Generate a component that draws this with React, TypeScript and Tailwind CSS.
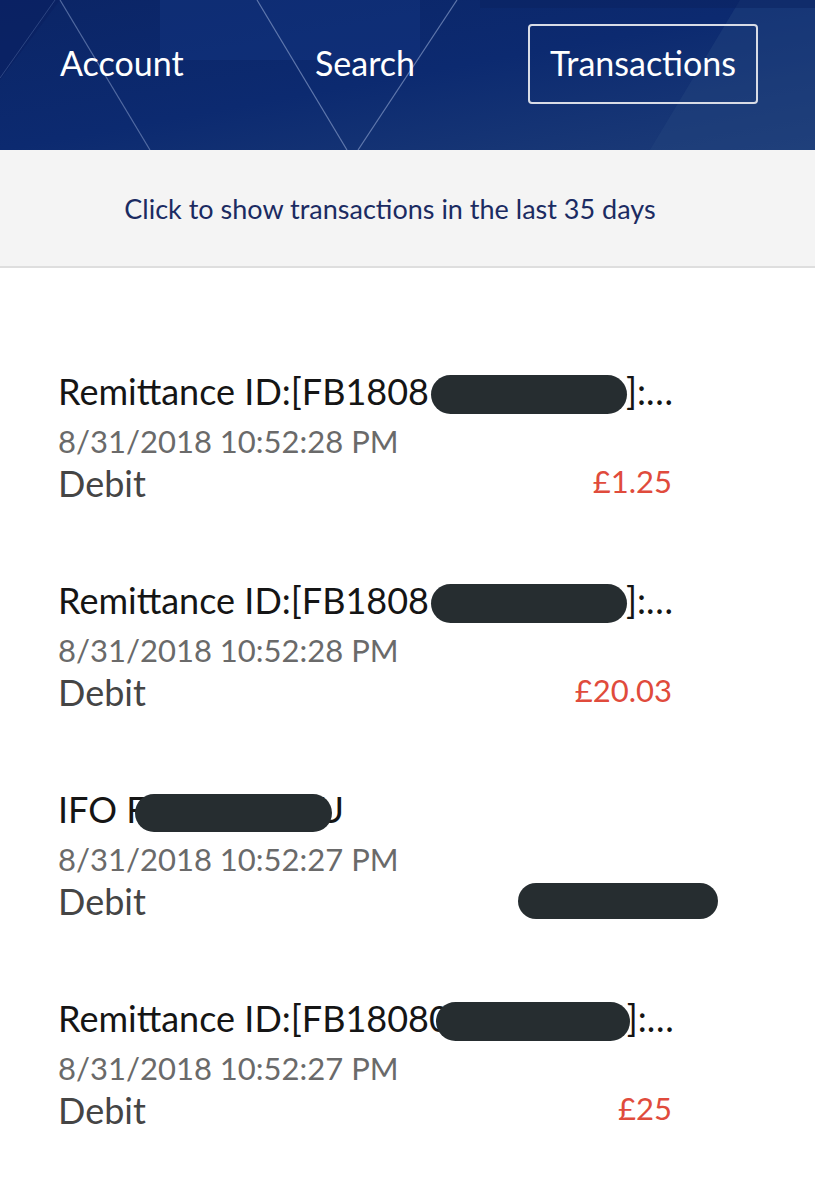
import React from "react";

const font = { fontFamily: "Lato, 'Open Sans', sans-serif" };

function Blob({ className }: { className: string }) {
  return <span className={"relative z-10 inline-block align-middle rounded-full bg-[#262d30] " + className} />;
}

type Row = {
  title: React.ReactNode;
  date: string;
  amount?: string;
};

const rows: Row[] = [
  {
    title: (
      <>
        Remittance ID:[FB1808
        <Blob className="w-[196px] h-[39px] ml-[2px] -mr-[1px] -mt-[2px]" />
        ]:…
      </>
    ),
    date: "8/31/2018 10:52:28 PM",
    amount: "£1.25",
  },
  {
    title: (
      <>
        Remittance ID:[FB1808
        <Blob className="w-[196px] h-[39px] ml-[2px] -mr-[1px] -mt-[2px]" />
        ]:…
      </>
    ),
    date: "8/31/2018 10:52:28 PM",
    amount: "£20.03",
  },
  {
    title: (
      <>
        IFO F
        <Blob className="w-[197px] h-[38px] -ml-[12px] -mr-[14px] -mt-[2px]" />
        U
      </>
    ),
    date: "8/31/2018 10:52:27 PM",
  },
  {
    title: (
      <>
        Remittance ID:[FB18080
        <Blob className="w-[194px] h-[39px] -ml-[14px] -mr-[3px] -mt-[2px]" />
        ]:…
      </>
    ),
    date: "8/31/2018 10:52:27 PM",
    amount: "£25",
  },
];

export default function App() {
  return (
    <div className="w-[815px] h-[1200px] bg-white overflow-hidden" style={font}>
      <header className="relative h-[150px] bg-gradient-to-br from-[#0b2566] via-[#0c2a70] to-[#1d3c78] overflow-hidden">
        <svg className="absolute inset-0" width="815" height="150" viewBox="0 0 815 150">
          <rect x="160" y="0" width="260" height="60" fill="#12347f" opacity="0.5" />
          <polygon points="0,0 60,0 0,80" fill="#0a2060" opacity="0.6" />
          <polygon points="740,0 815,0 815,150 650,150" fill="#24447f" opacity="0.45" />
          <line x1="60" y1="0" x2="150" y2="150" stroke="#6f86b8" strokeWidth="1.2" opacity="0.7" />
          <line x1="0" y1="78" x2="55" y2="0" stroke="#4e67a0" strokeWidth="1" opacity="0.5" />
          <line x1="257" y1="0" x2="347" y2="150" stroke="#7a90c0" strokeWidth="1.2" opacity="0.75" />
          <line x1="457" y1="0" x2="358" y2="150" stroke="#7a90c0" strokeWidth="1.2" opacity="0.75" />
          <rect x="480" y="0" width="335" height="8" fill="#0a2260" opacity="0.5" />
        </svg>
        <nav className="relative flex items-center h-full pb-[22px] text-white text-[34px]">
          <div className="w-[255px] pl-[60px] -mt-[4px]">Account</div>
          <div className="w-[273px] pl-[60px] -mt-[4px]">Search</div>
          <div className="w-[230px] h-[80px] border-2 border-[#d8dce6] rounded-[4px] flex items-center justify-center">
            <span className="-mt-[4px]">Transactions</span>
          </div>
        </nav>
      </header>
      <div className="h-[118px] bg-[#f4f4f4] border-b-2 border-[#dedede] flex items-center justify-center">
        <span className="text-[#1b2b62] text-[27px] -ml-[35px] mt-[2px]">Click to show transactions in the last 35 days</span>
      </div>
      <div className="pt-[102px] pl-[58px] pr-[143px]">
        {rows.map((r, i) => (
          <div key={i} className="h-[209px]">
            <div className="text-[36px] leading-[42px] text-[#151515] whitespace-nowrap">{r.title}</div>
            <div className="text-[31px] leading-[40px] mt-[7px] text-[#6a6a6a]">{r.date}</div>
            <div className="flex items-center justify-between h-[44px]">
              <span className="text-[36px] leading-[44px] text-[#454545]">Debit</span>
              {r.amount ? (
                <span className="text-[31px] text-[#e04b3c] -mt-[4px]">{r.amount}</span>
              ) : (
                <span className="inline-block w-[200px] h-[36px] rounded-full bg-[#262d30] -mr-[46px]" />
              )}
            </div>
          </div>
        ))}
      </div>
    </div>
  );
}
